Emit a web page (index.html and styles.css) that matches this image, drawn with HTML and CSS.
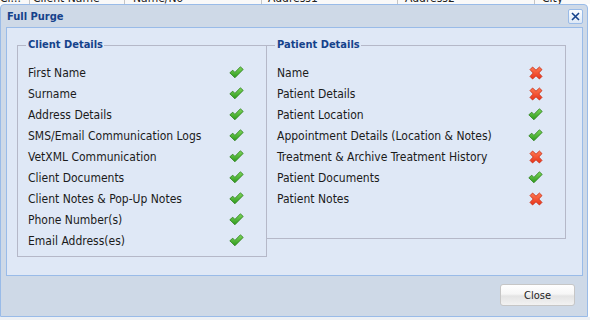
FILE: index.html
```html
<!DOCTYPE html>
<html lang="en">
  <head>
    <meta charset="UTF-8" />
    <title>Full Purge</title>
    <link rel="stylesheet" href="styles.css">
  </head>
  <body>
  <div class="grid-head">
    <div class="grid-cols">
      <div class="col col-a">Cl...</div>
      <div class="col col-b">Client Name</div>
      <div class="col col-c">Name/No</div>
      <div class="col col-d">Address1</div>
      <div class="col col-e">Address2</div>
      <div class="col col-f">City</div>
    </div>
  </div>

  <div class="window">
    <div class="window-header">
      <span class="window-title">Full Purge</span>
      <button class="tool-close" title="Close">
        <svg width="11" height="11" viewBox="0 0 11 11"><path d="M2 2 L9 9 M9 2 L2 9" stroke="#15428b" stroke-width="1.6" fill="none"/></svg>
      </button>
    </div>

    <div class="window-body">
      <fieldset class="group group-client">
        <legend>Client Details</legend>
        <ul class="purge-list">
          <li><span>First Name</span><i class="ok"></i></li>
          <li><span>Surname</span><i class="ok"></i></li>
          <li><span>Address Details</span><i class="ok"></i></li>
          <li><span>SMS/Email Communication Logs</span><i class="ok"></i></li>
          <li><span>VetXML Communication</span><i class="ok"></i></li>
          <li><span>Client Documents</span><i class="ok"></i></li>
          <li><span>Client Notes &amp; Pop-Up Notes</span><i class="ok"></i></li>
          <li><span>Phone Number(s)</span><i class="ok"></i></li>
          <li><span>Email Address(es)</span><i class="ok"></i></li>
        </ul>
      </fieldset>

      <fieldset class="group group-patient">
        <legend>Patient Details</legend>
        <ul class="purge-list">
          <li><span>Name</span><i class="no"></i></li>
          <li><span>Patient Details</span><i class="no"></i></li>
          <li><span>Patient Location</span><i class="ok"></i></li>
          <li><span>Appointment Details (Location &amp; Notes)</span><i class="ok"></i></li>
          <li><span>Treatment &amp; Archive Treatment History</span><i class="no"></i></li>
          <li><span>Patient Documents</span><i class="ok"></i></li>
          <li><span>Patient Notes</span><i class="no"></i></li>
        </ul>
      </fieldset>
    </div>

    <div class="window-footer">
      <button class="btn">Close</button>
    </div>
  </div>

  <div class="page-foot"></div>

  <svg width="0" height="0" class="defs">
    <defs>
      <linearGradient id="gOk" x1="0" y1="0" x2="0" y2="1">
        <stop offset="0" stop-color="#7fd65a"/>
        <stop offset="1" stop-color="#2c9a1c"/>
      </linearGradient>
      <linearGradient id="gNo" x1="0" y1="0" x2="0" y2="1">
        <stop offset="0" stop-color="#ff7a52"/>
        <stop offset="1" stop-color="#e8331a"/>
      </linearGradient>
    </defs>
  </svg>

  <script>
    // icons drawn once, reused in each row
    const okIcon = '<svg width="15" height="13" viewBox="0 0 15 13"><path d="M0.8 6.8 L3.8 4.2 L5.9 6.4 L11.4 0.8 L14.2 3.4 L5.9 11.8 Z" fill="url(#gOk)" stroke="#2b7d1a" stroke-width="0.8" stroke-linejoin="round"/></svg>';
    const noIcon = '<svg width="14" height="14" viewBox="0 0 14 14"><path d="M1 3.6 L3.6 1 L7 4.2 L10.4 1 L13 3.6 L9.8 7 L13 10.4 L10.4 13 L7 9.8 L3.6 13 L1 10.4 L4.2 7 Z" fill="url(#gNo)" stroke="#c72a12" stroke-width="0.8" stroke-linejoin="round"/></svg>';

    document.querySelectorAll('.purge-list i').forEach((el) => {
      el.innerHTML = el.classList.contains('ok') ? okIcon : noIcon;
    });
  </script>
  </body>
</html>
```

FILE: styles.css
```css
* {
  margin: 0;
  padding: 0;
  box-sizing: border-box;
}

body {
  width: 590px;
  height: 320px;
  overflow: hidden;
  background: #ffffff;
  font-family: Tahoma, "DejaVu Sans Condensed", "DejaVu Sans", sans-serif;
  font-size: 12px;
  color: #000;
}

.defs {
  position: absolute;
}

/* grid header peeking above the window */
.grid-head {
  height: 4px;
  overflow: hidden;
  background: #f9f9f9;
}

.grid-cols {
  display: flex;
  height: 16px;
  margin-top: -10px;
  line-height: 16px;
  color: #222;
}

.col {
  border-right: 1px solid #c5c5c5;
  padding-left: 4px;
  white-space: nowrap;
  overflow: hidden;
}

.col-a { width: 30px; padding-left: 0; }
.col-b { width: 95px; padding-left: 3px; }
.col-c { width: 137px; padding-left: 8px; }
.col-d { width: 136px; padding-left: 6px; }
.col-e { width: 137px; padding-left: 7px; }
.col-f { flex: 1; padding-left: 7px; border-right: none; }

/* window */
.window {
  width: 588px;
  height: 313px;
  background: #ced9e7;
  border: 1px solid #99bbe8;
  border-radius: 4px 4px 0 0;
  padding: 0 4px 0 5px;
  display: flex;
  flex-direction: column;
}

.window-header {
  height: 22px;
  display: flex;
  align-items: center;
  justify-content: space-between;
  padding: 0 0 0 1px;
}

.window-title {
  font-weight: bold;
  font-size: 11px;
  color: #15428b;
}

.tool-close {
  width: 15px;
  height: 15px;
  margin-top: 1px;
  border: 1px solid #99bbe8;
  border-radius: 2px;
  background: linear-gradient(#fbfdff, #dde8f6);
  display: flex;
  align-items: center;
  justify-content: center;
}

.window-body {
  height: 249px;
  background: #dfe8f6;
  border: 1px solid #99bbe8;
  padding: 10px 0 0 10px;
  display: flex;
  align-items: flex-start;
}

.group {
  border: 1px solid #b5b8c8;
  padding: 0 0 5px 8px;
}

.group legend {
  font-weight: bold;
  font-size: 11px;
  line-height: 14px;
  color: #15428b;
  padding: 0 1px 0 2px;
}

.group-client {
  width: 250px;
}

.group-patient {
  width: 300px;
  margin-left: -1px;
  padding-bottom: 29px;
}

.purge-list {
  list-style: none;
  padding-top: 10px;
}

.purge-list li {
  height: 21px;
  display: flex;
  align-items: center;
  justify-content: space-between;
  padding: 0 22px 0 2px;
  color: #1b1b1b;
  white-space: nowrap;
}

.purge-list i {
  display: flex;
  width: 15px;
  justify-content: center;
}

/* footer with button */
.window-footer {
  flex: 1;
  display: flex;
  justify-content: flex-end;
  align-items: flex-start;
  padding: 8px 8px 0 0;
}

.btn {
  width: 75px;
  height: 22px;
  border: 1px solid #c6c6c6;
  border-radius: 3px;
  background: linear-gradient(#ffffff 0%, #f6f6f6 45%, #e4e4e4 55%, #f2f2f2 100%);
  font-family: Tahoma, "DejaVu Sans Condensed", "DejaVu Sans", sans-serif;
  font-size: 11px;
  color: #222;
  cursor: pointer;
}

.page-foot {
  height: 3px;
  background: #eef1f5;
}
```
